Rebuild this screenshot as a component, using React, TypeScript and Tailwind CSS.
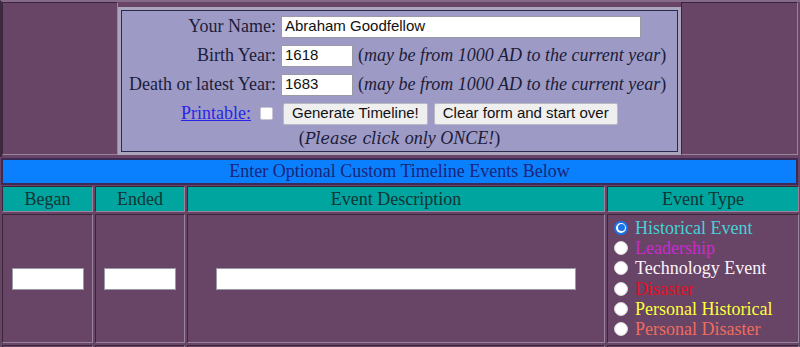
import React from "react";

const serif = "font-['Liberation_Serif',serif]";
const sans = "font-['Liberation_Sans',Arial,sans-serif]";

// inset table cell borders (dark top/left, light bottom/right)
const inset =
  "border-t border-l border-b border-r border-t-[#3a2639] border-l-[#3a2639] border-b-[#9a869c] border-r-[#9a869c]";

type EventType = { label: string; color: string; checked?: boolean };

const eventTypes: EventType[] = [
  { label: "Historical Event", color: "text-[#45d2d6]", checked: true },
  { label: "Leadership", color: "text-[#c92bd0]" },
  { label: "Technology Event", color: "text-[#fbf4fb]" },
  { label: "Disaster", color: "text-[#e0101e]" },
  { label: "Personal Historical", color: "text-[#ffff3c]" },
  { label: "Personal Disaster", color: "text-[#ee6c5c]" },
];

function TextBox({ value = "", className = "" }: { value?: string; className?: string }) {
  return (
    <div
      className={`h-[22px] bg-white border border-[#9a9aa6] px-[3px] flex items-center text-[15px] text-[#111] ${sans} ${className}`}
    >
      {value}
    </div>
  );
}

function Btn({ children }: { children: React.ReactNode }) {
  return (
    <div
      className={`h-[22px] px-[8px] flex items-center bg-[#efefef] border border-[#b9b9c4] rounded-[2px] text-[15px] text-[#111] whitespace-nowrap ${sans}`}
    >
      {children}
    </div>
  );
}

function Radio({ checked }: { checked?: boolean }) {
  if (checked) {
    return (
      <span className="w-[14px] h-[14px] rounded-full border-2 border-[#1a73e8] bg-white flex items-center justify-center shrink-0">
        <span className="w-[7px] h-[7px] rounded-full bg-[#1a73e8]" />
      </span>
    );
  }
  return <span className="w-[14px] h-[14px] rounded-full bg-white border border-[#d8d4da] shrink-0" />;
}

function YearNote() {
  return (
    <span className="text-[18px] text-[#1c1c3a] whitespace-nowrap">
      (<i>may be from 1000 AD to the current year</i>)
    </span>
  );
}

export default function App() {
  return (
    <div className={`w-[800px] h-[347px] overflow-hidden bg-[#684466] ${serif}`}>
      {/* Top form table */}
      <div className="h-[157px] flex border-t-2 border-t-[#85698a] border-l-2 border-l-[#3e2a40] pr-[2px]">
        <div className={`w-[116px] h-[153px] ${inset}`} />
        <div className="w-[563px] pt-[5px]">
          <div className="h-[148px] border-[3px] border-[#aaa5bc]">
            <div className="h-full border border-[#2a2a4c] bg-[#9d9bc6] pl-[4px] pt-[1px]">
              <div className="grid grid-cols-[150px_1fr] gap-x-[5px] text-[18px] text-[#1c1c3a]">
                <div className="h-[29px] flex items-center justify-end whitespace-nowrap">Your Name:</div>
                <div className="h-[29px] flex items-center">
                  <TextBox value="Abraham Goodfellow" className="w-[360px]" />
                </div>

                <div className="h-[29px] flex items-center justify-end whitespace-nowrap">Birth Year:</div>
                <div className="h-[29px] flex items-center gap-[5px]">
                  <TextBox value="1618" className="w-[72px]" />
                  <YearNote />
                </div>

                <div className="h-[29px] flex items-center justify-end whitespace-nowrap">Death or latest Year:</div>
                <div className="h-[29px] flex items-center gap-[5px]">
                  <TextBox value="1683" className="w-[72px]" />
                  <YearNote />
                </div>

                <div className="h-[29px] flex items-center justify-end whitespace-nowrap">
                  <a href="#" className="text-[#2a24e6] underline">
                    Printable:
                  </a>
                  <span className="ml-[9px] mr-[3px] w-[13px] h-[13px] bg-white border border-[#c9c7d6] rounded-[2px]" />
                </div>
                <div className="h-[29px] flex items-center gap-[6px] pl-[2px]">
                  <Btn>Generate Timeline!</Btn>
                  <Btn>Clear form and start over</Btn>
                </div>
              </div>
              <div className="text-center text-[18px] leading-[20px] text-[#1c1c3a] pr-[4px]">
                (<i className="font-['DejaVu_Serif',serif] text-[16px]">Please click</i> <i>only ONCE!</i>)
              </div>
            </div>
          </div>
        </div>
        <div className={`flex-1 h-[153px] ${inset}`} />
      </div>

      {/* Blue banner */}
      <div className="ml-px mr-[2px] mt-px h-[27px] border-2 border-[#3a2c56] bg-[#0a80ff] flex items-center justify-center text-[18px] text-[#1b2577]">
        Enter Optional Custom Timeline Events Below
      </div>

      {/* Header row */}
      <div className="grid grid-cols-[91px_90px_418px_192px] gap-x-[2px] pl-[2px] mt-px">
        {["Began", "Ended", "Event Description", "Event Type"].map((h) => (
          <div
            key={h}
            className={`h-[26px] bg-[#00a59f] flex items-center justify-center text-[18px] text-[#123434] ${inset}`}
          >
            {h}
          </div>
        ))}
      </div>

      {/* Event row */}
      <div className="grid grid-cols-[91px_90px_418px_192px] gap-x-[2px] pl-[2px] mt-[2px]">
        <div className={`h-[129px] flex items-center justify-center ${inset}`}>
          <TextBox className="w-[72px]" />
        </div>
        <div className={`h-[129px] flex items-center justify-center ${inset}`}>
          <TextBox className="w-[72px]" />
        </div>
        <div className={`h-[129px] flex items-center justify-center ${inset}`}>
          <TextBox className="w-[360px]" />
        </div>
        <div className={`h-[129px] flex flex-col justify-center pl-[6px] ${inset}`}>
          {eventTypes.map((e) => (
            <div key={e.label} className="h-[20.4px] flex items-center gap-[7px]">
              <Radio checked={e.checked} />
              <span className={`text-[18px] leading-none whitespace-nowrap ${e.color}`}>{e.label}</span>
            </div>
          ))}
        </div>
      </div>

      {/* Next (cut off) row */}
      <div className="grid grid-cols-[91px_90px_418px_192px] gap-x-[2px] pl-[2px] mt-[2px]">
        {[0, 1, 2, 3].map((i) => (
          <div key={i} className={`h-[40px] ${inset}`} />
        ))}
      </div>
    </div>
  );
}
